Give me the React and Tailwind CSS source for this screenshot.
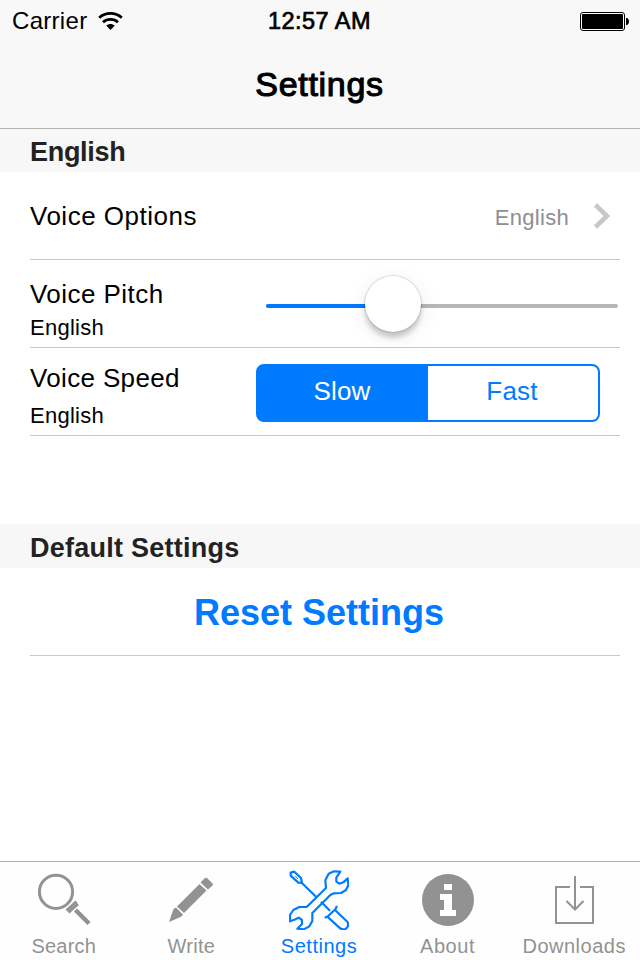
import React, { useState } from 'react';

function WifiIcon() {
  return (
    <svg className="w-[25px] h-[19px]" viewBox="0 0 25 19" fill="none" stroke="#000" strokeWidth="2.8">
      <path d="M1.2 5.7C7.6 0 17.4 0 23.8 5.7" />
      <path d="M5 10.2C9.2 6.5 15.8 6.5 20 10.2" />
      <path d="M8.2 13.6C10.8 11.4 14.2 11.4 16.8 13.6L12.5 18Z" fill="#000" stroke="none" />
    </svg>
  );
}

function BatteryIcon() {
  return (
    <svg className="w-[49px] h-[19px]" viewBox="0 0 49 19">
      <rect x=".5" y=".5" width="44" height="18" rx="2.5" fill="#fff" stroke="#000" />
      <rect x="2" y="2" width="41" height="15" rx="1" fill="#000" />
      <path d="M46 6h1.2c1.2 1 1.8 2.1 1.8 3.5s-.6 2.5-1.8 3.5H46Z" fill="#000" />
    </svg>
  );
}

function SearchIcon() {
  return (
    <svg className="w-[60px] h-[60px]" viewBox="1 0 60 60" fill="none" stroke="currentColor">
      <circle cx="23" cy="21.8" r="16.6" strokeWidth="3" />
      <path d="M33.5 40.5L43.5 31.5M35.5 42.5L45 34" strokeWidth="2.8" />
      <path d="M42.5 40L56 53.5" strokeWidth="4.4" />
    </svg>
  );
}

function WriteIcon() {
  return (
    <svg className="w-[60px] h-[60px]" viewBox="0 2 60 60" fill="currentColor">
      <path d="M8 54L12.5 41L15 39.5L22 46.5L20.5 48.5Z" />
      <path d="M16 38.5L38.5 16L45.5 22.5L23 45Z" />
      <path d="M39.5 14.5L43.5 10.5Q45 9 46.5 10.5L51.5 15.5Q52.5 16.5 51.5 17.5L47 21.5Z" />
    </svg>
  );
}

function ToolsIcon() {
  return (
    <svg className="w-[60px] h-[60px]" viewBox="57 29 180 180" fill="none" stroke="currentColor" strokeWidth="6.5" strokeLinejoin="round">
      {/* Screwdriver */}
      <path d="M62 37L73 34L93 53L96 68L85 67L62 46Z" />
      <path d="M75 46L84 56" strokeWidth="3" />
      <path d="M95 67L138 109M153 124L180 151" />
      <path d="M201 137L196 147L174 168L164 172" />
      <path d="M195 149L232 184Q238 197 228 205Q217 210 208 202L172 169" />
      {/* Wrench */}
      <path d="M110 140L168 83L166 60L176 40L192 33L211 34L199 52V64L208 70L220 66L233 54L235 74L228 89L213 98L190 99L181 104L127 158L127 182L118 198L101 207L82 205L96 191V179L86 172L73 178L60 183V164L70 149L88 140Z" />
    </svg>
  );
}

function AboutIcon() {
  return (
    <svg className="w-[60px] h-[60px]" viewBox="-1 0 60 60">
      <circle cx="30" cy="30" r="26" fill="currentColor" />
      <path d="M26 14h8v6h-8ZM22 24h12v16h4v6H22v-6h4V30h-4Z" fill="#fff" />
    </svg>
  );
}

function DownloadsIcon() {
  return (
    <svg className="w-[60px] h-[60px]" viewBox="0 0 60 60" fill="none" stroke="currentColor" strokeWidth="2">
      <path d="M26 17H12V53H49V17H36" />
      <path d="M31 6V39M22.5 31L31 39.5L39.5 31" />
    </svg>
  );
}

const tabs = [
  { label: 'Search', Icon: SearchIcon, tracking: 'tracking-[0.2px]' },
  { label: 'Write', Icon: WriteIcon, tracking: 'tracking-[0.3px]' },
  { label: 'Settings', Icon: ToolsIcon, tracking: 'tracking-[0.5px]' },
  { label: 'About', Icon: AboutIcon, tracking: 'tracking-[0.6px] pl-0.5' },
  { label: 'Downloads', Icon: DownloadsIcon, tracking: 'tracking-[0.5px]' },
];

function SectionHeader({ title, className }) {
  return (
    <div className={`shrink-0 bg-[#f7f7f7] pl-[30px] flex items-center text-[27px] font-bold text-[#222] ${className}`}>
      {title}
    </div>
  );
}

function Row({ children, className = '' }) {
  return (
    <div className={`ml-[30px] mr-5 h-[88px] shrink-0 border-b border-[#c8c7cc] flex ${className}`}>
      {children}
    </div>
  );
}

export default function App() {
  const [speed, setSpeed] = useState('Slow');
  const [activeTab, setActiveTab] = useState('Settings');

  return (
    <div className="w-[640px] h-[960px] bg-white text-black flex flex-col overflow-hidden whitespace-nowrap font-['Liberation_Sans',Arial,sans-serif]">
      {/* Status bar + title */}
      <header className="h-[129px] shrink-0 bg-[#f8f8f8] border-b border-[#b2b2b2]">
        <div className="h-10 grid grid-cols-3 items-center pl-3 pr-[11px] text-[24px] leading-[42px]">
          <div className="flex items-center gap-[11px]">
            <span className="tracking-[0.3px]">Carrier</span>
            <WifiIcon />
          </div>
          <div className="pr-0.5 text-center text-[23.5px] tracking-[0.45px] [-webkit-text-stroke:0.7px_#000]">12:57 AM</div>
          <div className="flex justify-end">
            <BatteryIcon />
          </div>
        </div>
        <h1 className="pr-px text-center text-[34px] leading-[88px] tracking-[0.7px] [-webkit-text-stroke:1.1px_#000]">Settings</h1>
      </header>

      <SectionHeader title="English" className="h-[43px] pt-[3px] tracking-[-0.3px]" />

      <Row className="items-center justify-between">
        <span className="pt-0.5 text-[26px] tracking-[0.5px]">Voice Options</span>
        <div className="flex items-center pr-[10px] text-[#8e8e93]">
          <span className="pt-[3px] text-[22px] tracking-[0.3px]">English</span>
          <svg className="w-4 h-[26px] ml-[25px] mt-px" viewBox="0 0 16 26" fill="none" stroke="#c7c7cc" strokeWidth="4.5">
            <path d="M1.5 2L13 13L1.5 24" />
          </svg>
        </div>
      </Row>

      <Row className="justify-between">
        <div className="pt-[18px]">
          <div className="text-[26px] leading-8 tracking-[0.45px]">Voice Pitch</div>
          <div className="mt-0.5 text-[22px] leading-8 tracking-[0.25px]">English</div>
        </div>
        {/* Pitch slider */}
        <div className="relative w-[352px] h-1 mt-11 mr-0.5 rounded-full bg-[#b6b6b6]">
          <div className="w-[127px] h-1 rounded-full bg-[#007aff]" />
          <div className="absolute left-[99px] -top-7 size-14 rounded-full bg-white shadow-[0_0_1px_1px_rgba(0,0,0,0.12),0_6px_5px_rgba(0,0,0,0.18),0_5px_22px_rgba(0,0,0,0.08)]" />
        </div>
      </Row>

      <Row className="justify-between">
        <div className="pt-[14px]">
          <div className="text-[26px] leading-8 tracking-[0.35px]">Voice Speed</div>
          <div className="mt-1.5 text-[22px] leading-8 tracking-[0.25px]">English</div>
        </div>
        <div className="w-[344px] h-[58px] mt-4 mr-5 flex rounded-lg border-2 border-[#007aff] bg-[#007aff] overflow-hidden">
          {['Slow', 'Fast'].map((option) => (
            <button
              key={option}
              onClick={() => setSpeed(option)}
              className={`w-1/2 pr-0.5 pb-1 text-[26px] tracking-[0.2px] ${speed === option ? 'bg-[#007aff] text-white' : 'bg-white text-[#007aff]'}`}
            >
              {option}
            </button>
          ))}
        </div>
      </Row>

      <SectionHeader title="Default Settings" className="h-11 mt-[88px] pt-1 tracking-[0.25px]" />

      <Row className="items-center justify-center">
        <button className="pt-[3px] pr-3 text-[36px] font-bold text-[#007aff]">Reset Settings</button>
      </Row>

      {/* Tab bar */}
      <nav className="mt-auto h-[99px] shrink-0 border-t border-[#b2b2b2] bg-[#fefefe] grid grid-cols-5 pr-0.5">
        {tabs.map(({ label, Icon, tracking }) => (
          <button
            key={label}
            onClick={() => setActiveTab(label)}
            className={`flex flex-col items-center pt-2 ${activeTab === label ? 'text-[#007aff]' : 'text-[#929292]'}`}
          >
            <Icon />
            <span className={`mt-1 text-[20px] leading-6 ${tracking}`}>{label}</span>
          </button>
        ))}
      </nav>
    </div>
  );
}
